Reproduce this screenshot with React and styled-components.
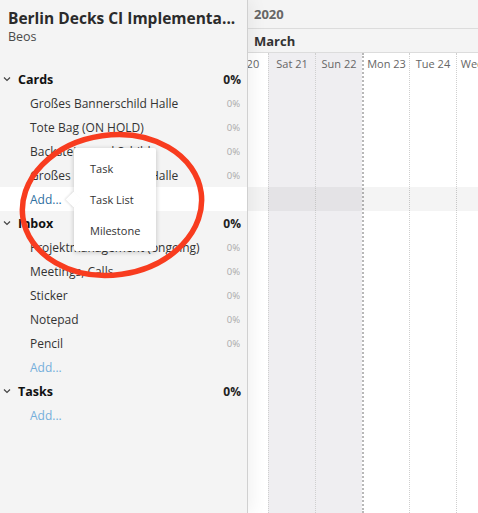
import styled, { createGlobalStyle } from "styled-components";

const GlobalStyle = createGlobalStyle`
  html, body { margin: 0; padding: 0; background: #fff; }
  body { font-family: "Open Sans", "Liberation Sans", sans-serif; }
`;

const sections = [
  {
    name: "Cards",
    active: true,
    items: [
      "Großes Bannerschild Halle",
      "Tote Bag (ON HOLD)",
      "Backsteinwand Schild",
      "Großes Bannerschild Halle",
    ],
  },
  {
    name: "Inbox",
    items: ["Projektmanagement (ongoing)", "Meetings, Calls", "Sticker", "Notepad", "Pencil"],
  },
  { name: "Tasks", items: [] },
];

const days = [
  { label: "Fri 20" },
  { label: "Sat 21", weekend: true },
  { label: "Sun 22", weekend: true },
  { label: "Mon 23", weekStart: true },
  { label: "Tue 24" },
  { label: "Wed 25" },
];

const Chevron = () => (
  <svg width="8" height="6" viewBox="0 0 8 6">
    <path d="M1 1.5 L4 4.5 L7 1.5" fill="none" stroke="#444" strokeWidth="1.2" />
  </svg>
);

const App = () => {
  return (
    <Frame>
      <GlobalStyle />
      <Sidebar>
        <ProjectHead>
          <Title>Berlin Decks CI Implementa...</Title>
          <Client>Beos</Client>
        </ProjectHead>
        {sections.map((section) => (
          <div key={section.name}>
            <SectionRow>
              <ChevronBox>
                <Chevron />
              </ChevronBox>
              <SectionName>{section.name}</SectionName>
              <SectionPct>0%</SectionPct>
            </SectionRow>
            {section.items.map((item, i) => (
              <ItemRow key={i}>
                <ItemName>{item}</ItemName>
                <ItemPct>0%</ItemPct>
              </ItemRow>
            ))}
            <AddRow $active={section.active}>
              <AddLink $active={section.active}>Add...</AddLink>
            </AddRow>
          </div>
        ))}
      </Sidebar>
      <Timeline>
        <YearRow>2020</YearRow>
        <MonthRow>March</MonthRow>
        <Columns>
          {days.map((d) => (
            <DayColumn key={d.label} $weekend={d.weekend} $weekStart={d.weekStart}>
              <DayLabel>{d.label}</DayLabel>
            </DayColumn>
          ))}
        </Columns>
        <HighlightBand />
      </Timeline>
      <Popup>
        <PopupItem>Task</PopupItem>
        <PopupItem>Task List</PopupItem>
        <PopupItem>Milestone</PopupItem>
      </Popup>
      <Annotation width="478" height="513" viewBox="0 0 478 513">
        <ellipse
          cx="112"
          cy="205"
          rx="90"
          ry="70"
          transform="rotate(-8 112 205)"
          fill="none"
          stroke="#f83c1f"
          strokeWidth="5.5"
        />
      </Annotation>
    </Frame>
  );
};

export default App;

const Frame = styled.div`
  position: relative;
  display: flex;
  width: 478px;
  height: 513px;
  overflow: hidden;
  background: #fff;
`;

const Sidebar = styled.div`
  position: relative;
  z-index: 2;
  flex: 0 0 247px;
  background: #f4f4f4;
  border-right: 1px solid #d0d0d0;
  box-shadow: 4px 0 16px rgba(0, 0, 0, 0.06);
`;

const ProjectHead = styled.div`
  padding: 8px 8px 0 8px;
  margin-bottom: 21px;
`;

const Title = styled.div`
  font-size: 15.5px;
  font-weight: 700;
  line-height: 20px;
  color: #2b2b2b;
  white-space: nowrap;
`;

const Client = styled.div`
  font-size: 12.5px;
  line-height: 18px;
  color: #4a4a4a;
`;

const SectionRow = styled.div`
  display: flex;
  align-items: center;
  height: 24px;
  padding-right: 6px;
`;

const ChevronBox = styled.div`
  width: 18px;
  display: flex;
  justify-content: center;
  box-sizing: border-box;
  padding-right: 4px;
`;

const SectionName = styled.div`
  flex: 1;
  font-size: 12.5px;
  font-weight: 700;
  color: #111;
`;

const SectionPct = styled.div`
  font-size: 12px;
  font-weight: 700;
  color: #222;
`;

const ItemRow = styled.div`
  display: flex;
  align-items: center;
  height: 24px;
  padding: 0 7px 0 30px;
`;

const ItemName = styled.div`
  flex: 1;
  font-size: 12px;
  color: #333;
  white-space: nowrap;
`;

const ItemPct = styled.div`
  font-size: 9.5px;
  color: #aaa;
`;

const AddRow = styled.div`
  display: flex;
  align-items: center;
  height: 24px;
  padding-left: 30px;
  background: ${(p) => (p.$active ? "#fff" : "transparent")};
`;

const AddLink = styled.span`
  font-size: 12px;
  color: ${(p) => (p.$active ? "#2f6f9f" : "#74afdb")};
`;

const Timeline = styled.div`
  position: relative;
  flex: 1;
  display: flex;
  flex-direction: column;
  min-width: 0;
`;

const YearRow = styled.div`
  height: 29px;
  box-sizing: border-box;
  padding-left: 6px;
  display: flex;
  align-items: center;
  background: #f4f4f4;
  border-bottom: 1px solid #dcdcdc;
  font-size: 13px;
  font-weight: 700;
  color: #666;
`;

const MonthRow = styled.div`
  height: 24px;
  box-sizing: border-box;
  padding-left: 6px;
  display: flex;
  align-items: center;
  background: #f4f4f4;
  border-bottom: 1px solid #dcdcdc;
  font-size: 13px;
  font-weight: 700;
  color: #333;
`;

const Columns = styled.div`
  flex: 1;
  display: flex;
  margin-left: -27px;
`;

const DayColumn = styled.div`
  flex: 0 0 47px;
  box-sizing: border-box;
  border-left: ${(p) => (p.$weekStart ? "2px dotted #b8b8b8" : "1px dotted #cfcfcf")};
  background: ${(p) => (p.$weekend ? "#efeef1" : "#fff")};
`;

const DayLabel = styled.div`
  height: 20px;
  display: flex;
  align-items: center;
  justify-content: center;
  font-size: 11px;
  color: #666;
  white-space: nowrap;
  overflow: hidden;
`;

const HighlightBand = styled.div`
  position: absolute;
  left: 0;
  right: 0;
  top: 187px;
  height: 24px;
  background: rgba(0, 0, 0, 0.045);
`;

const Popup = styled.div`
  position: absolute;
  z-index: 3;
  left: 74px;
  top: 148px;
  width: 82px;
  padding: 5px 0;
  background: #fff;
  border-radius: 2px;
  box-shadow: 0 1px 5px rgba(0, 0, 0, 0.22);
  &::before {
    content: "";
    position: absolute;
    left: -6px;
    top: 46px;
    width: 11px;
    height: 11px;
    background: #fff;
    transform: rotate(45deg);
    box-shadow: -1px 1px 2px rgba(0, 0, 0, 0.1);
  }
`;

const PopupItem = styled.div`
  position: relative;
  height: 31px;
  display: flex;
  align-items: center;
  padding-left: 16px;
  font-size: 11px;
  color: #333;
`;

const Annotation = styled.svg`
  position: absolute;
  z-index: 4;
  left: 0;
  top: 0;
  pointer-events: none;
`;
